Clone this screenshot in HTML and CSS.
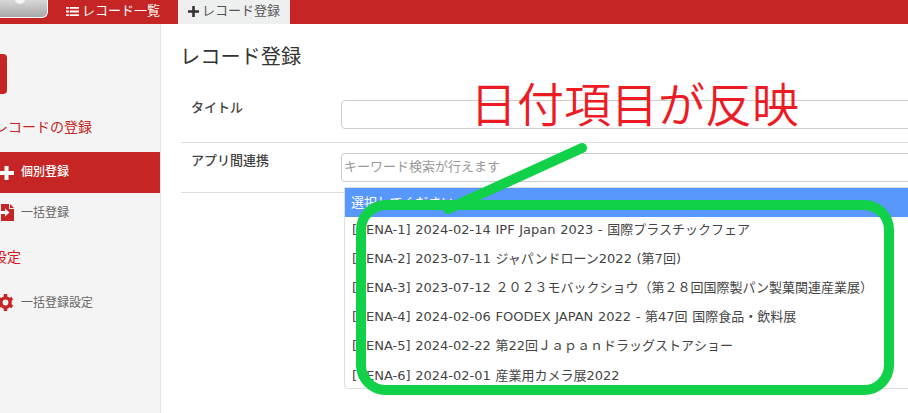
FILE: index.html
```html
<!DOCTYPE html>
<html lang="ja">
<head>
<meta charset="utf-8">
<title>レコード登録</title>
<link rel="stylesheet" href="styles.css">
</head>
<body>
<header class="topbar">
  <div class="logo"><span class="logo-dot"></span></div>
  <a class="nav-item">
    <svg class="nav-icon" viewBox="0 0 14 12"><path d="M0 1h3v2H0zM4 1h10v2H4zM0 5h3v2H0zM4 5h10v2H4zM0 9h3v2H0zM4 9h10v2H4z" fill="#fff"/></svg>
    <span>レコード一覧</span>
  </a>
  <a class="nav-item nav-item-active">
    <svg class="nav-icon nav-plus" viewBox="0 0 12 12"><path d="M4.600 0h2.800v4.600H12v2.800H7.400V12H4.600V7.400H0V4.600h4.600z" fill="#333"/></svg>
    <span>レコード登録</span>
  </a>
</header>
<div class="layout">
  <aside class="sidebar">
    <div class="side-badge"></div>
    <h3 class="side-head">レコードの登録</h3>
    <a class="side-link side-link-active">
      <svg class="side-icon" viewBox="0 0 14 14"><path d="M4.500 0h4v5h5.500v4H8.500v5h-4V9H-1V5h5.500z" fill="#fff"/></svg>
      <span>個別登録</span>
    </a>
    <a class="side-link">
      <svg class="side-icon side-icon-file" viewBox="0 0 14 17"><path d="M1 0h8v5h5v12H1z" fill="#c52525"/><path d="M10 0l4 4h-4z" fill="#c52525"/><path d="M-1 7h6V4.500L9.500 8.500 5 12.500V10H-1z" fill="#fff"/></svg>
      <span>一括登録</span>
    </a>
    <h3 class="side-head side-head-second">設定</h3>
    <a class="side-link">
      <svg class="side-icon side-icon-gear" viewBox="0 0 14 17">
        <circle cx="5.500" cy="8.500" r="4.600" fill="none" stroke="#c52525" stroke-width="3.400"/>
        <path d="M5.500 0v3M5.500 14v3M-1.900 4.200l2.600 1.500M9.700 11.300l2.600 1.500M-1.900 12.800l2.600-1.500M9.700 5.700l2.600-1.500" fill="none" stroke="#c52525" stroke-width="3.600"/>
      </svg>
      <span>一括登録設定</span>
    </a>
  </aside>
  <main class="content">
    <h1 class="page-title">レコード登録</h1>
    <div class="form-row form-row-title">
      <label class="form-label">タイトル</label>
      <input class="form-input" type="text">
    </div>
    <div class="form-row form-row-link">
      <label class="form-label">アプリ間連携</label>
      <div class="select-wrap">
        <div class="form-input form-search">キーワード検索が行えます</div>
        <ul class="dropdown">
          <li class="option option-selected">選択してください</li>
          <li class="option"><span class="bracket">[</span>ENA-1] 2024-02-14 IPF Japan 2023 - 国際プラスチックフェア</li>
          <li class="option"><span class="bracket">[</span>ENA-2] 2023-07-11 ジャパンドローン2022 (第7回)</li>
          <li class="option"><span class="bracket">[</span>ENA-3] 2023-07-12 ２０２３モバックショウ（第２８回国際製パン製菓関連産業展）</li>
          <li class="option"><span class="bracket">[</span>ENA-4] 2024-02-06 FOODEX JAPAN 2022 - 第47回 国際食品・飲料展</li>
          <li class="option"><span class="bracket">[</span>ENA-5] 2024-02-22 第22回Ｊａｐａｎドラッグストアショー</li>
          <li class="option"><span class="bracket">[</span>ENA-6] 2024-02-01 産業用カメラ展2022</li>
        </ul>
      </div>
    </div>
  </main>
</div>
<div class="note">日付項目が反映</div>
<svg class="markup" viewBox="0 0 908 413">
  <path d="M582 148 448 209" fill="none" stroke="#10d148" stroke-width="10" stroke-linecap="round"/>
  <rect x="361" y="205" width="528" height="185" rx="25" fill="none" stroke="#10d148" stroke-width="10"/>
</svg>
</body>
</html>
```

FILE: styles.css
```css
* { box-sizing: border-box; }
html, body { margin: 0; height: 100%; overflow: hidden; }
body {
  position: relative;
  background: #fff;
  color: #333;
  font: 13px/1.4 "DejaVu Sans", "Noto Sans CJK JP", sans-serif;
}
.topbar {
  display: flex;
  align-items: stretch;
  height: 24px;
  background: #c52525;
}
.logo {
  position: relative;
  width: 48px;
  height: 18px;
  margin-right: 18px;
  background: linear-gradient(#d8d8d8, #a8a8a8);
  border-right: 1px solid #fff;
  border-bottom: 1px solid #fff;
  border-radius: 0 0 6px 0;
}
.logo-dot {
  position: absolute;
  left: 15px;
  top: -6px;
  width: 10px;
  height: 10px;
  border-radius: 50%;
  background: #f4f4f4;
}
.nav-item {
  display: flex;
  align-items: center;
  gap: 3px;
  padding-bottom: 3px;
  font-family: "Noto Sans CJK JP", sans-serif;
  font-size: 13px;
  color: #fff;
}
.nav-icon { width: 13px; height: 11px; margin-top: 1px; }
.nav-item-active {
  margin-left: 18px;
  padding: 0 9px 3px 10px;
  width: 112px;
  background: #eef0f0;
  color: #555;
}
.nav-plus { width: 11px; height: 11px; }
.layout { display: flex; height: 389px; }
.sidebar {
  flex: 0 0 161px;
  padding-top: 30px;
  background: #f4f4f4;
  border-right: 1px solid #e4e4e4;
  font-family: "Noto Sans CJK JP", sans-serif;
  overflow: hidden;
}
.side-badge {
  width: 7px;
  height: 40px;
  background: #c52525;
  border-radius: 0 4px 4px 0;
}
.side-head {
  margin: 22px 0 16px -6px;
  font-size: 14px;
  font-weight: 400;
  line-height: 20px;
  color: #c52525;
}
.side-head-second { margin: 12px 0 17px -7px; color: #d8141e; }
.side-link {
  display: flex;
  align-items: center;
  gap: 7px;
  height: 41px;
  width: 160px;
  padding-bottom: 2px;
  font-size: 12px;
  color: #666;
}
.side-link-active {
  background: #c52525;
  color: #fff;
  font-weight: 500;
}
.side-icon { width: 14px; height: 14px; flex: none; overflow: visible; margin-top: 2px; }
.side-icon-file, .side-icon-gear { height: 17px; margin-top: 0; }
.content { flex: 1; min-width: 0; padding-left: 20px; overflow: hidden; position: relative; }
.page-title {
  margin: 19px 0 0 -1px;
  font-family: "Noto Sans CJK JP", sans-serif;
  font-size: 20.200px;
  font-weight: 400;
  line-height: 26px;
  color: #333;
}
.form-row {
  display: flex;
  padding-left: 10px;
  margin-right: -20px;
  border-bottom: 1px solid #ddd;
}
.form-row-title { height: 74px; padding-top: 31px; }
.form-row-link { height: 50px; padding-top: 10px; }
.form-label {
  flex: 0 0 150px;
  margin-top: -1px;
  font-family: "Noto Sans CJK JP", sans-serif;
  font-size: 13px;
  font-weight: 500;
  line-height: 16px;
  color: #444;
}
.form-input {
  flex: 1;
  height: 29px;
  border: 1px solid #ccc;
  border-radius: 4px;
  background: #fff;
}
.select-wrap { position: relative; flex: 1; }
.form-search {
  padding: 0 2px;
  font-family: "Noto Sans CJK JP", sans-serif;
  font-size: 13px;
  line-height: 23px;
  color: #999;
}
.dropdown {
  position: absolute;
  left: 3px;
  right: 0;
  top: 34px;
  height: 202px;
  margin: 0;
  padding: 0;
  list-style: none;
  background: #fff;
  border: 1px solid #ddd;
  border-radius: 0 0 4px 4px;
}
.option {
  height: 29.200px;
  padding-left: 7px;
  line-height: 29.600px;
  word-spacing: 0.500px;
  white-space: nowrap;
  color: #444;
}
.bracket { margin-right: 9px; }
.option-selected { margin-bottom: -2.500px; padding-left: 6px; background: #5897fb; color: #fff; }
.note {
  position: absolute;
  left: 470px;
  top: 69px;
  font-family: "Noto Sans CJK JP", sans-serif;
  font-size: 47px;
  font-weight: 350;
  line-height: 66px;
  color: #ed1c24;
  white-space: nowrap;
}
.markup {
  position: absolute;
  left: 0;
  top: 0;
  width: 908px;
  height: 413px;
  pointer-events: none;
}
```
